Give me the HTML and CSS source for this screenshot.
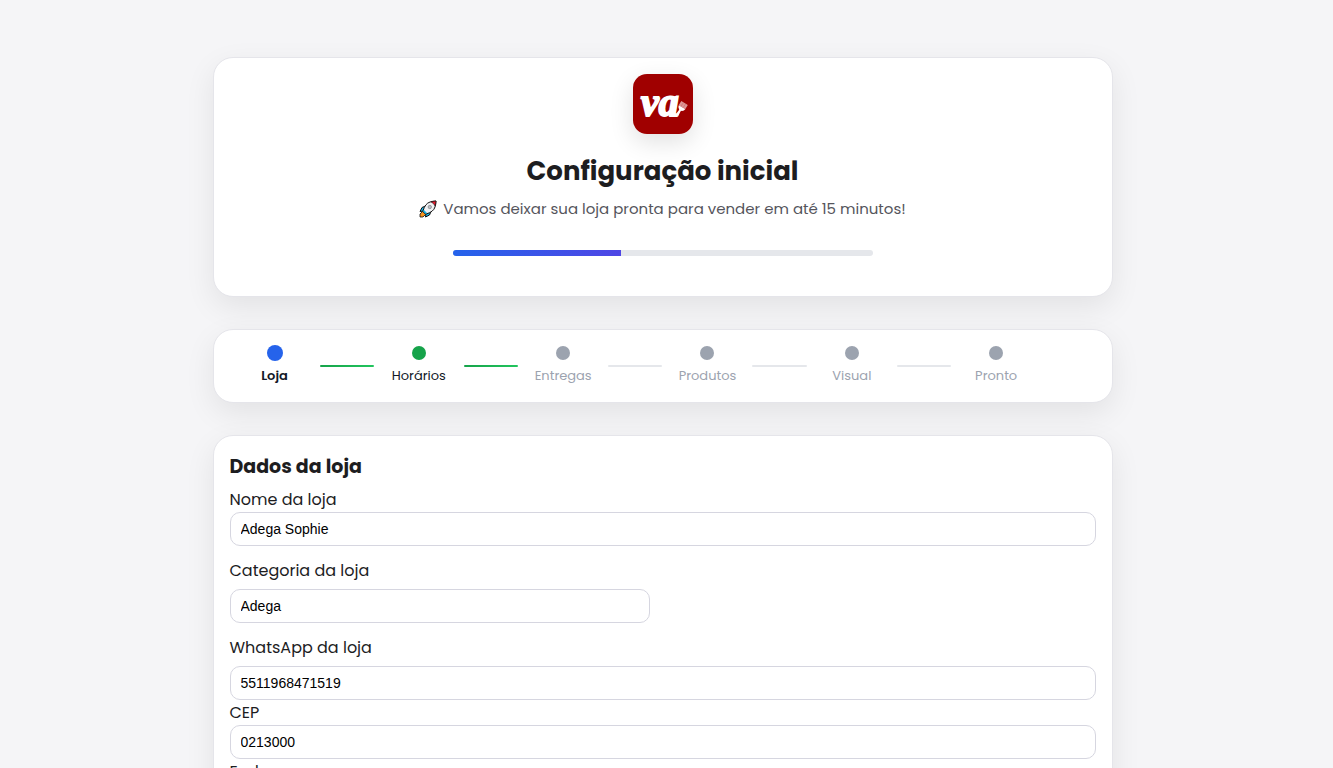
FILE: index.html
```html
<!DOCTYPE html>
<html lang="pt-BR">

<head>
    <meta charset="UTF-8">
    <meta name="viewport" content="width=device-width, initial-scale=1.0">
    <title>Configuração inicial</title>
    <link rel="stylesheet" href="styles.css">
</head>

<body>
    <main class="container">

        <header class="card header">
            <svg class="logo" viewBox="0 0 60 60" role="img" aria-label="va">
                <rect width="60" height="60" fill="#a00000" />
                <text class="logo-text" x="8" y="42">va</text>
                <g transform="translate(46 38) rotate(32)">
                    <path d="M-1.500 4L-1-2Q-3.800-3-3.800-6H3.800Q3.800-3 1-2L1.500 4Z" fill="#fff" />
                    <path d="M-3.800-5.500V-10.500H3.800V-5.500Z" fill="#dc9696" />
                    <path d="M-1.300-6V-10.500M1.300-6V-10.500" stroke="#c86464" stroke-width=".5" />
                </g>
            </svg>
            <h1>Configuração inicial</h1>
            <p class="subtitle">
                <svg class="rocket" viewBox="0 0 18 18" aria-hidden="true">
                    <path d="M6.500 6L3 7.500 1 11.500 5 11ZM12 11.500L10.500 15 6.500 17 7 13Z" fill="#18b4e8" stroke="#111" />
                    <path d="M3.500 11.500L1 14V17L4 17 6.500 14.500Z" fill="#f7941d" stroke="#111" stroke-width=".8" />
                    <path d="M4 11Q6 3.500 11 2 14 1 17 1 17 4 16 7 14.500 12 7 14Z" fill="#f0f1f4" stroke="#111" />
                    <path d="M12 1.800L17 1 16.200 6Q15 3.500 12 1.800Z" fill="#e8192c" stroke="#111" stroke-width=".6" />
                    <circle cx="10.800" cy="7" r="1.700" fill="#b8bcc4" stroke="#777" stroke-width=".6" />
                    <path d="M5 10L8 13 6.500 14 4 11.500Z" fill="#18b4e8" />
                </svg>
                Vamos deixar sua loja pronta para vender em até 15 minutos!
            </p>
            <div class="progress">
                <div class="progress-bar" style="width: 40%"></div>
            </div>
        </header>

        <nav class="card steps">
            <div class="step active">
                <div class="step-info"><span class="dot"></span><span>Loja</span></div>
                <div class="line done"></div>
            </div>
            <div class="step complete">
                <div class="step-info"><span class="dot"></span><span>Horários</span></div>
                <div class="line done"></div>
            </div>
            <div class="step">
                <div class="step-info"><span class="dot"></span><span>Entregas</span></div>
                <div class="line"></div>
            </div>
            <div class="step">
                <div class="step-info"><span class="dot"></span><span>Produtos</span></div>
                <div class="line"></div>
            </div>
            <div class="step">
                <div class="step-info"><span class="dot"></span><span>Visual</span></div>
                <div class="line"></div>
            </div>
            <div class="step">
                <div class="step-info"><span class="dot"></span><span>Pronto</span></div>
            </div>
        </nav>

        <form class="card form">
            <h2>Dados da loja</h2>

            <label for="nome">Nome da loja</label>
            <input type="text" id="nome" value="Adega Sophie">

            <div class="field">
                <label for="categoria">Categoria da loja</label>
                <input type="text" id="categoria" class="short" value="Adega">
            </div>

            <div class="field">
                <label for="whatsapp">WhatsApp da loja</label>
                <input type="text" id="whatsapp" value="5511968471519">
            </div>

            <label for="cep">CEP</label>
            <input type="text" id="cep" value="0213000">

            <label for="endereco">Endereço</label>
            <input type="text" id="endereco">
        </form>

    </main>
</body>

</html>
```

FILE: styles.css
```css
* {
    margin: 0;
    padding: 0;
    box-sizing: border-box;
}

body {
    background: #f5f5f7;
    color: #1d1d1f;
    font-family: "Poppins", "Inter", sans-serif;
    font-size: 16px;
    line-height: 25px;
    padding: 57px 24px 32px 16px;
}

.container {
    max-width: 900px;
    margin: 0 auto;
    display: flex;
    flex-direction: column;
    gap: 32px;
}

.card {
    background: #fff;
    border: 1px solid #e5e5ea;
    border-radius: 20px;
    padding: 16px;
    box-shadow: 0 10px 30px rgba(0, 0, 0, 0.08);
}

/* topo */
.header {
    display: flex;
    flex-direction: column;
    align-items: center;
    text-align: center;
    padding-bottom: 40px;
}

.logo {
    width: 60px;
    height: 60px;
    border-radius: 14px;
    box-shadow: 0 8px 24px rgba(0, 0, 0, 0.12);
}

.logo-text {
    fill: #fff;
    stroke: #fff;
    stroke-width: 2px;
    font: italic bold 40px "Liberation Serif", serif;
}

h1 {
    font-size: 26px;
    line-height: 40px;
    font-weight: 700;
    margin-top: 17px;
}

.subtitle {
    display: flex;
    align-items: center;
    justify-content: center;
    gap: 6px;
    color: #55555c;
    font-size: 15px;
    margin-top: 5px;
}

.rocket {
    width: 18px;
    height: 18px;
    flex-shrink: 0;
}

.progress {
    width: 100%;
    max-width: 420px;
    height: 6px;
    margin-top: 29px;
    background: #e5e7eb;
    border-radius: 6px;
    overflow: hidden;
}

.progress-bar {
    height: 100%;
    background: linear-gradient(90deg, #2563eb, #4f46e5);
}

/* etapas */
.steps {
    display: grid;
    grid-template-columns: repeat(6, 1fr);
    padding: 15px 16px 16px;
}

.step {
    display: flex;
    align-items: center;
    color: #9ca3af;
    font-size: 13px;
    line-height: 20px;
}

.step-info {
    width: 90px;
    display: flex;
    flex-direction: column;
    align-items: center;
    gap: 5px;
}

.dot {
    width: 14px;
    height: 14px;
    margin: 1px;
    border-radius: 50%;
    background: #9ca3af;
}

.line {
    flex: 1;
    height: 2px;
    border-radius: 2px;
    background: #e5e7eb;
}

.line.done {
    background: linear-gradient(90deg, #16a34a, #22c55e);
}

.complete,
.active {
    color: #111827;
}

.complete .dot {
    background: #16a34a;
}

.active {
    font-weight: 600;
}

.active .dot {
    width: 16px;
    height: 16px;
    margin: 0;
    background: #2563eb;
}

/* formulario */
.form {
    display: flex;
    flex-direction: column;
}

h2 {
    font-size: 19px;
    line-height: 30px;
    font-weight: 700;
    margin-bottom: 5px;
}

.field {
    display: flex;
    flex-direction: column;
    gap: 6px;
    margin-top: 12px;
}

input {
    width: 100%;
    height: 34px;
    padding: 0 10px;
    border: 1px solid #d6d6e0;
    border-radius: 10px;
    background: #fff;
    color: #000;
    font: 14px "Liberation Sans", Arial, sans-serif;
}

input.short {
    max-width: 420px;
}
```
